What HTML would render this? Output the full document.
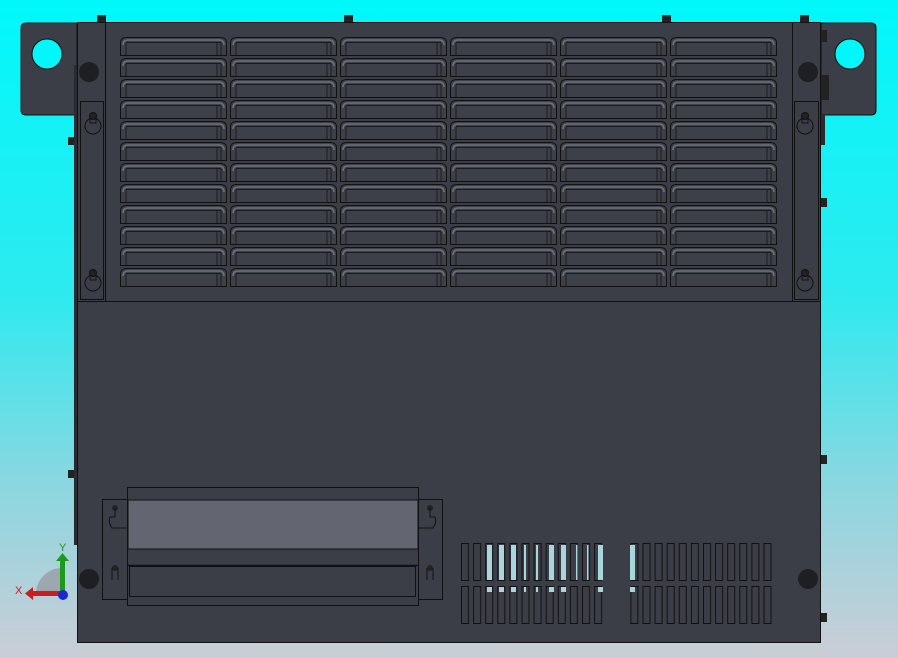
<!DOCTYPE html>
<html><head><meta charset="utf-8"><style>
html,body{margin:0;padding:0;width:898px;height:658px;overflow:hidden}
svg{display:block}
</style></head><body>
<svg width="898" height="658" viewBox="0 0 898 658" xmlns="http://www.w3.org/2000/svg" font-family="Liberation Sans, sans-serif">
<defs>
<linearGradient id="bg" x1="0" y1="0" x2="0" y2="1">
<stop offset="0" stop-color="#00f8fb"/>
<stop offset="0.45" stop-color="#2eeaef"/>
<stop offset="0.75" stop-color="#8fd6df"/>
<stop offset="1" stop-color="#cbcdd6"/>
</linearGradient>
<pattern id="vent" x="120" y="37" width="110" height="21" patternUnits="userSpaceOnUse">
<path d="M0.5,18.5 V6 Q0.5,0.5 7,0.5 H100 Q106.5,0.5 106.5,6 V18.5 Z" fill="#3e4049" stroke="#111" stroke-width="1"/>
<path d="M3,8 Q3,3 8,3 H99 Q104,3 104,8" fill="none" stroke="#6d6f7a" stroke-width="1.5"/>
<line x1="6" y1="5.5" x2="101" y2="5.5" stroke="#1a1b20" stroke-width="1"/>
<line x1="6" y1="6" x2="6" y2="18" stroke="#1a1b20"/>
<line x1="97" y1="6" x2="97" y2="18" stroke="#1a1b20"/>
<line x1="101" y1="6" x2="101" y2="18" stroke="#1a1b20"/>
</pattern>
<pattern id="slot" x="461" y="0" width="12.1" height="700" patternUnits="userSpaceOnUse">
<rect x="0.5" y="543.5" width="7" height="37" fill="#3c3e47" stroke="#111"/>
<rect x="0.5" y="586.5" width="7" height="37" fill="#3c3e47" stroke="#111"/>
</pattern>
<g id="key"><circle cx="0" cy="10" r="8" fill="#3c3e47" stroke="#111"/><rect x="-3" y="-2" width="6" height="9" fill="#3c3e47" stroke="#111"/><circle cx="0" cy="0" r="3.5" fill="#222" stroke="#111"/></g>
</defs>
<rect width="898" height="658" fill="url(#bg)"/>
<!-- brackets -->
<path d="M77,23 H26 Q21,23 21,28 V110 Q21,115 26,115 H77 Z" fill="#3c3e47" stroke="#111"/>
<circle cx="47" cy="54" r="15" fill="#00f8fb" stroke="#111"/>
<path d="M821,23 H871 Q876,23 876,28 V110 Q876,115 871,115 H821 Z" fill="#3c3e47" stroke="#111"/>
<circle cx="850" cy="54" r="15" fill="#00f8fb" stroke="#111"/>
<rect x="820" y="75" width="9" height="25" fill="#222"/>
<rect x="821" y="30" width="6" height="12" fill="#222"/>
<rect x="820" y="115" width="5" height="30" fill="#2a2b30"/>
<!-- tabs -->
<rect x="97" y="15" width="9" height="8" fill="#222"/>
<rect x="344" y="15" width="9" height="8" fill="#222"/>
<rect x="662" y="15" width="9" height="8" fill="#222"/>
<rect x="800" y="15" width="9" height="8" fill="#222"/>
<rect x="68" y="137" width="9" height="8" fill="#222"/>
<rect x="68" y="470" width="9" height="8" fill="#222"/>
<rect x="821" y="198" width="6" height="9" fill="#222"/>
<rect x="821" y="455" width="6" height="9" fill="#222"/>
<rect x="821" y="613" width="6" height="9" fill="#222"/>
<rect x="74" y="65" width="3" height="480" fill="#2a2b30"/>
<!-- main body -->
<rect x="77.5" y="22.5" width="743" height="620" fill="#3c3e47" stroke="#111"/>
<line x1="105.5" y1="23" x2="105.5" y2="302" stroke="#111"/>
<line x1="792.5" y1="23" x2="792.5" y2="302" stroke="#111"/>
<line x1="78" y1="301.5" x2="820" y2="301.5" stroke="#111"/>
<rect x="80.5" y="101.5" width="23" height="198" fill="none" stroke="#111"/>
<rect x="794.5" y="101.5" width="24" height="198" fill="none" stroke="#111"/>
<use href="#key" x="93" y="116"/>
<use href="#key" x="93" y="273"/>
<use href="#key" x="805" y="116"/>
<use href="#key" x="805" y="273"/>
<rect x="120" y="37" width="660" height="252" fill="url(#vent)"/>
<circle cx="89" cy="72" r="10" fill="#1e1f23"/>
<circle cx="808" cy="72" r="10" fill="#1e1f23"/>
<circle cx="89" cy="579" r="10" fill="#1e1f23"/>
<circle cx="808" cy="579" r="10" fill="#1e1f23"/>
<!-- bottom panel -->
<rect x="102.5" y="499.5" width="340" height="100" fill="none" stroke="#111"/>
<rect x="127.5" y="487.5" width="291" height="118" fill="#3c3e47" stroke="#111"/>
<rect x="128" y="500" width="290" height="49" fill="#636571" stroke="#111"/>
<rect x="129.5" y="566.5" width="286" height="30" fill="none" stroke="#111"/>
<line x1="128" y1="565.5" x2="418" y2="565.5" stroke="#111" stroke-width="1.5"/>
<circle cx="115" cy="508" r="3" fill="#222"/><circle cx="115" cy="568" r="3" fill="#222"/>
<circle cx="430" cy="508" r="3" fill="#222"/><circle cx="430" cy="568" r="3" fill="#222"/>
<path d="M115,508 V517 H110 Q108,523 112,528 H127" fill="none" stroke="#111"/>
<path d="M430,508 V517 H435 Q437,523 433,528 H419" fill="none" stroke="#111"/>
<path d="M112,568 V580 M118,568 V580 M427,568 V580 M433,568 V580" stroke="#111"/>
<!-- slots -->
<rect x="460" y="540" width="146" height="90" fill="url(#slot)"/>
<rect x="627" y="540" width="146" height="90" fill="url(#slot)" transform="translate(0,0)"/>
<g fill="#a8d6dc">
<rect x="487" y="545" width="5" height="35"/><rect x="499" y="545" width="5" height="35"/><rect x="511" y="545" width="5" height="35"/>
<rect x="524" y="545" width="2" height="35"/><rect x="536" y="545" width="2" height="35"/><rect x="549" y="545" width="5" height="35"/>
<rect x="561" y="545" width="5" height="35"/><rect x="576" y="545" width="1.5" height="35"/><rect x="587" y="545" width="1.5" height="35"/>
<rect x="598" y="545" width="5" height="35"/><rect x="630" y="545" width="5" height="35"/>
<rect x="487" y="587" width="5" height="5"/><rect x="499" y="587" width="5" height="5"/><rect x="511" y="587" width="5" height="5"/>
<rect x="524" y="587" width="2" height="5"/><rect x="536" y="587" width="2" height="5"/><rect x="549" y="587" width="5" height="5"/>
<rect x="561" y="587" width="5" height="5"/><rect x="598" y="587" width="5" height="5"/><rect x="630" y="587" width="5" height="5"/>
</g>
<!-- triad -->
<path d="M62,568 A26,26 0 0 0 36,594 H62 Z" fill="#9a9ca3" opacity="0.8"/>
<rect x="60" y="560" width="5" height="33" fill="#1b9a1b"/>
<path d="M56,561 L62.5,553 L69,561 Z" fill="#1b9a1b"/>
<rect x="32" y="591" width="30" height="5" fill="#c81e1e"/>
<path d="M33,587 L25,593.5 L33,600 Z" fill="#c81e1e"/>
<circle cx="63" cy="595" r="5" fill="#1a2ad0"/>
<text x="59" y="551" font-size="11" fill="#1b9a1b">Y</text>
<text x="15" y="594" font-size="11" fill="#c81e1e">X</text>
</svg>
</body></html>
